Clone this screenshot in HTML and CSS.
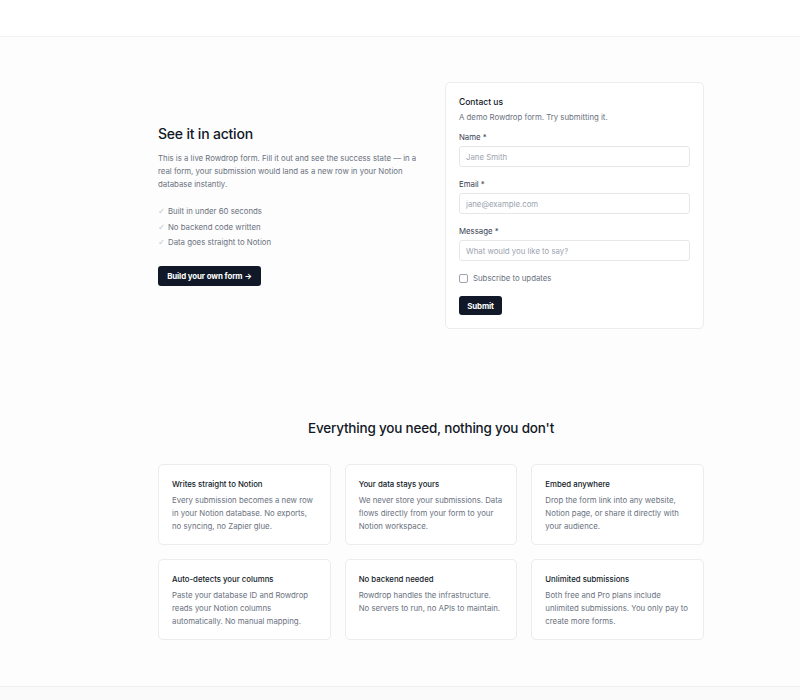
FILE: index.html
```html
<!DOCTYPE html>
<html>
<head>
<meta charset="utf-8">
<link rel="stylesheet" href="styles.css">
</head>
<body>
<header class="topbar"></header>
<main class="main">
  <section class="demo">
    <div class="container demo-grid">
      <div class="intro">
        <h2 class="intro-title">See it in action</h2>
        <p class="intro-text">This is a live Rowdrop form. Fill it out and see the success state — in a real form, your submission would land as a new row in your Notion database instantly.</p>
        <ul class="checks">
          <li><span class="tick">✓</span>Built in under 60 seconds</li>
          <li><span class="tick">✓</span>No backend code written</li>
          <li><span class="tick">✓</span>Data goes straight to Notion</li>
        </ul>
        <a class="btn btn-cta" href="#">Build your own form <span class="arrow">→</span></a>
      </div>
      <form class="form-card">
        <div class="form-title">Contact us</div>
        <div class="form-sub">A demo Rowdrop form. Try submitting it.</div>
        <label class="field">
          <span class="label">Name *</span>
          <input class="input" type="text" placeholder="Jane Smith">
        </label>
        <label class="field">
          <span class="label">Email *</span>
          <input class="input" type="text" placeholder="jane@example.com">
        </label>
        <label class="field">
          <span class="label">Message *</span>
          <input class="input" type="text" placeholder="What would you like to say?">
        </label>
        <label class="check-row">
          <span class="box"></span>
          <span>Subscribe to updates</span>
        </label>
        <button class="btn btn-submit" type="button">Submit</button>
      </form>
    </div>
  </section>
  <section class="features">
    <div class="container">
      <h2 class="features-title">Everything you need, nothing you don't</h2>
      <div class="feature-grid">
        <div class="card">
          <div class="card-title">Writes straight to Notion</div>
          <p class="card-text">Every submission becomes a new row in your Notion database. No exports, no syncing, no Zapier glue.</p>
        </div>
        <div class="card">
          <div class="card-title">Your data stays yours</div>
          <p class="card-text">We never store your submissions. Data flows directly from your form to your Notion workspace.</p>
        </div>
        <div class="card">
          <div class="card-title">Embed anywhere</div>
          <p class="card-text">Drop the form link into any website, Notion page, or share it directly with your audience.</p>
        </div>
        <div class="card">
          <div class="card-title">Auto-detects your columns</div>
          <p class="card-text">Paste your database ID and Rowdrop reads your Notion columns automatically. No manual mapping.</p>
        </div>
        <div class="card">
          <div class="card-title">No backend needed</div>
          <p class="card-text">Rowdrop handles the infrastructure. No servers to run, no APIs to maintain.</p>
        </div>
        <div class="card">
          <div class="card-title">Unlimited submissions</div>
          <p class="card-text">Both free and Pro plans include unlimited submissions. You only pay to create more forms.</p>
        </div>
      </div>
    </div>
  </section>
</main>
<footer class="footer"></footer>
</body>
</html>
```

FILE: styles.css
```css
* { box-sizing: border-box; }
html, body { margin: 0; padding: 0; }
body {
  font-family: Inter, "Noto Sans", sans-serif;
  color: #111827;
  background: #ffffff;
  font-size: 7.8px;
  -webkit-font-smoothing: antialiased;
}
.topbar {
  height: 37px;
  border-bottom: 1px solid #f0f1f3;
  background: #ffffff;
}
.main { background: #fdfdfd; }
.container {
  width: 546px;
  margin-left: 158px;
}
.demo { padding: 45px 0 0; }
.demo-grid {
  display: grid;
  grid-template-columns: 1fr 1fr;
  gap: 28px;
  align-items: center;
}
.intro-title {
  margin: 0 0 9px;
  font-size: 14px;
  font-weight: 500;
  letter-spacing: -0.2px;
  line-height: 18px;
}
.intro-text {
  margin: 0 0 13px;
  color: #6b7280;
  font-size: 7.8px;
  line-height: 13px;
}
.checks {
  list-style: none;
  margin: 0 0 15px;
  padding: 0;
  color: #6b7280;
  font-size: 7.8px;
}
.checks li {
  line-height: 15.5px;
  display: flex;
  align-items: center;
}
.tick {
  color: #c4c9d0;
  width: 10px;
  font-family: "DejaVu Sans", sans-serif;
  font-size: 8.5px;
}
.btn {
  display: inline-flex;
  align-items: center;
  justify-content: center;
  background: #111827;
  color: #ffffff;
  font-family: inherit;
  font-weight: 700;
  font-size: 7.9px;
  border: none;
  border-radius: 3px;
  text-decoration: none;
  letter-spacing: -0.1px;
}
.arrow { margin-left: 2px; }
.btn-cta {
  height: 20px;
  padding: 0 8px;
  width: 103px;
}
.form-card {
  background: #ffffff;
  border: 1px solid #ebecef;
  border-radius: 5px;
  padding: 13px 13px 13px;
  display: flex;
  flex-direction: column;
  align-items: stretch;
}
.form-title {
  font-size: 8.5px;
  font-weight: 500;
  line-height: 12px;
  height: 12px;
}
.form-sub {
  color: #6b7280;
  font-size: 7.8px;
  line-height: 12px;
  height: 12px;
  margin-top: 3px;
  margin-bottom: 9px;
}
.field {
  display: flex;
  flex-direction: column;
  margin-bottom: 12px;
}
.label {
  display: block;
  font-size: 7.8px;
  color: #374151;
  line-height: 10px;
  height: 10px;
  margin-bottom: 4px;
}
.input {
  height: 21px;
  flex: 0 0 21px;
  border: 1px solid #e5e7eb;
  border-radius: 3px;
  padding: 0 6px;
  font-family: inherit;
  font-size: 7.8px;
  color: #111827;
  background: #ffffff;
  outline: none;
  margin: 0;
}
.input::placeholder { color: #9ca3af; }
.check-row {
  display: flex;
  align-items: center;
  gap: 5px;
  color: #6b7280;
  font-size: 7.8px;
  line-height: 10px;
  height: 10px;
  margin-bottom: 13px;
}
.box {
  width: 9px;
  height: 9px;
  border: 1px solid #9ca3af;
  border-radius: 2px;
  background: #fff;
}
.btn-submit {
  align-self: flex-start;
  height: 19px;
  width: 43px;
  padding: 0;
}
.features { padding: 90px 0 46px; }
.features-title {
  margin: 0 0 27px;
  text-align: center;
  font-size: 13.5px;
  font-weight: 500;
  line-height: 18px;
  letter-spacing: -0.2px;
}
.feature-grid {
  display: grid;
  grid-template-columns: repeat(3, 1fr);
  gap: 14px;
}
.card {
  background: #ffffff;
  border: 1px solid #ebecef;
  border-radius: 5px;
  padding: 14px 13px 11px;
  min-height: 81px;
}
.card-title {
  font-size: 7.8px;
  font-weight: 500;
  line-height: 11px;
  margin-bottom: 4px;
}
.card-text {
  margin: 0;
  color: #6b7280;
  font-size: 7.8px;
  line-height: 13px;
  text-wrap: pretty;
}
.footer {
  height: 40px;
  background: #fafafa;
  border-top: 1px solid #f0f1f3;
}
```
